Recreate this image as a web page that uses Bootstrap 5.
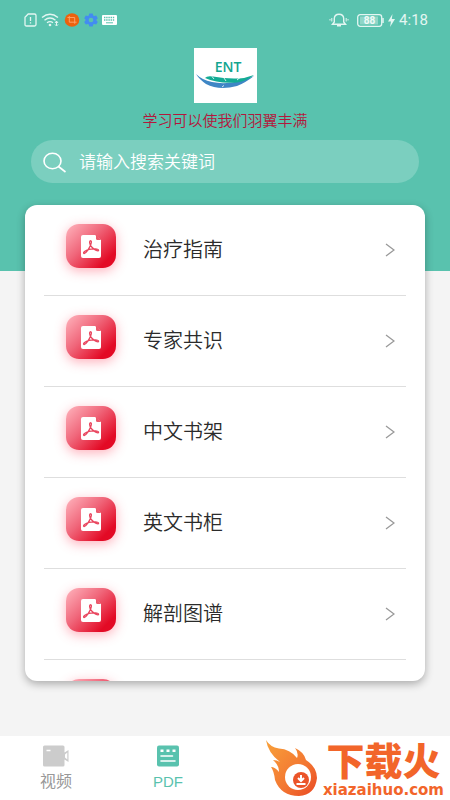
<!DOCTYPE html>
<html lang="zh-CN">
<head>
<meta charset="utf-8">
<meta name="viewport" content="width=device-width, initial-scale=1">
<title>PDF</title>
<link href="https://cdn.jsdelivr.net/npm/bootstrap@5.3.0/dist/css/bootstrap.min.css" rel="stylesheet">
<style>
:root { --teal: #59c2ae; }
body { background: #f4f4f4; color: #333; font-family: Roboto, "Noto Sans CJK SC", sans-serif; }
svg { display: block; flex: none; }
.top-area { background: var(--teal); padding-bottom: 88px; }
.status { height: 40px; padding: 0 22px 0 24px; color: #e3f6f2; font-size: 15px; }
.status-left { gap: 4px; }
.brand { margin-top: 8px; }
.slogan { color: #b3173c; font-size: 15px; font-weight: 350; line-height: 20px; margin: 8px 0 9px; }
.search { height: 43px; margin: 0 31px; padding: 2px 12px 0; gap: 12px; background: #7bcfbf; }
.search input { font-size: 17px; font-weight: 350; color: #fff; outline: 0; }
.search input::placeholder { color: #fff; opacity: 1; }
.panel { margin: -66px 25px 55px; border-radius: 12px; box-shadow: 0 3px 9px rgba(0,0,0,.3); flex: 1 1 0; min-height: 0; }
.entry { height: 91px; margin: 0 19px; padding: 0 11px 0 22px; border-bottom: 1px solid #dedede; color: #2b2b2b; font-size: 20px; font-weight: 350; }
.entry-icon { width: 50px; height: 44px; margin: -8px 27px 0 0; border-radius: 13px; background: linear-gradient(135deg, #ffb5be 0%, #f0667a 42%, #e30a25 82%); box-shadow: 0 3px 12px rgba(255,70,95,.42); }
.tabs { height: 64px; background: #fff; }
.tab { width: 112px; padding-top: 9px; font-size: 16px; line-height: 26px; color: #999; }
.tab svg { margin-bottom: 2px; }
.tab-on { color: var(--teal); font-family: "Liberation Sans", sans-serif; font-size: 15px; }
.site { color: #f2652a; padding-right: 6px; gap: 4px; }
.site-name { font: 900 38px/44px "Noto Sans CJK SC", sans-serif; }
.site-url { font: bold 15px/18px "DejaVu Sans", sans-serif; }
</style>
</head>
<body>
<div class="d-flex flex-column vh-100 overflow-hidden">
  <header class="top-area">
    <div class="status d-flex align-items-center justify-content-between">
      <div class="status-left d-flex align-items-center">
        <svg width="13" height="14" viewBox="0 0 13 14" fill="none" stroke="currentColor" stroke-width="1.3"><path d="M4.2 1H10.5Q12 1 12 2.500V11.500Q12 13 10.500 13H2.500Q1 13 1 11.500V4.200Z"/><path d="M6.500 4V8M6.500 9.200V10.500"/></svg>
        <svg width="19" height="14" viewBox="0 0 19 14" fill="none" stroke="currentColor" stroke-width="1.400"><path d="M1 4.500Q9 -2 17 4.500M3.500 7.200Q9 2.800 14.500 7.200M6 9.700Q9 7.500 12 9.700"/><circle cx="9" cy="12" r="1.300" fill="currentColor" stroke="none"/><path d="M15.500 8V12.500M14 10L15.500 8L17 10M14 11.500L15.500 13L17 11.500" stroke-width="1"/></svg>
        <svg width="16" height="14" viewBox="0 0 16 14"><ellipse cx="8" cy="7" rx="7.300" ry="6.700" fill="#ed620e"/><path d="M3.500 4.500H10.700V10.700M5.300 3V9.200H12.500" fill="none" stroke="#ffa066" stroke-width="1"/></svg>
        <svg width="14" height="14" viewBox="0 0 14 14"><path d="M5.300 .6H8.700L9.200 2.500L10.300 3.100L12.200 2.600L13.800 5.300L12.500 6.600V7.600L13.800 8.900L12.200 11.500L10.300 10.900L9.200 11.600L8.700 13.400H5.300L4.800 11.600L3.700 10.900L1.800 11.500L.2 8.900L1.500 7.600V6.600L.2 5.300L1.800 2.600L3.700 3.100L4.800 2.500Z" fill="#438cf1"/><circle cx="7" cy="7" r="2.300" fill="#59c2ae"/></svg>
        <svg width="15" height="10" viewBox="0 0 15 10"><rect width="15" height="10" rx="1" fill="#fff"/><path d="M2 2.500H13M2 5H13" stroke="#59c2ae" stroke-width="1.400" stroke-dasharray="1.400 .8"/><path d="M4 7.800H11" stroke="#59c2ae"/></svg>
      </div>
      <div class="d-flex align-items-center">
        <svg width="20" height="14" viewBox="0 0 20 14" fill="none" stroke="currentColor" stroke-width="1.400"><path d="M3.500 11.200H16.500L14.700 9V5.500Q14.500 1.200 10 1.200Q5.500 1.200 5.300 5.500V9ZM8 12.800H12"/><path d="M2.800 5V8.500M1 6V7.500M17.200 5V8.500M19 6V7.500" stroke-width="1"/></svg>
        <svg class="ms-2" width="27" height="13" viewBox="0 0 27 13"><rect x=".7" y=".7" width="24" height="11.600" rx="2.500" fill="none" stroke="currentColor" stroke-width="1.300"/><rect x="3" y="2.500" width="18" height="8" fill="#8fd6c8"/><path d="M26 4V9" stroke="currentColor" stroke-width="1.500"/><text x="12.500" y="10" text-anchor="middle" font-family="Roboto, sans-serif" font-size="10" font-weight="700" fill="#f0fbf8">88</text></svg>
        <svg class="mx-1" width="7" height="13" viewBox="0 0 7 13"><path d="M4.500 0L0 7.500H3L2 13L7 5H3.800Z" fill="currentColor"/></svg>
        <span>4:18</span>
      </div>
    </div>
    <svg class="brand mx-auto" width="63" height="55" viewBox="0 0 63 55"><rect width="63" height="55" fill="#fff"/><text x="34" y="24" text-anchor="middle" font-family="Open Sans, sans-serif" font-size="14" font-weight="600" fill="#13a58f">ENT</text><path d="M2 26Q8 32 18 34Q37 38 60 28Q51 35 43 38Q25 43 12 36Q5 31 2 26Z" fill="#3f86c5"/><path d="M11 30Q13 27.500 19 28.500Q35 31.500 50 30L60 27Q53 33 43 34.500Q24 36 11 30Z" fill="#13ab94"/><path d="M18 28.500L20 31M30 30L32 33M43 32L46 29.500M28 39L30 37.500" stroke="#fff" stroke-width=".8"/></svg>
    <p class="slogan text-center">学习可以使我们羽翼丰满</p>
    <form class="search d-flex align-items-center rounded-pill" role="search">
      <svg width="24" height="22" viewBox="0 0 24 22" fill="none" stroke="#fff" stroke-width="1.600"><ellipse cx="9.500" cy="9" rx="8.500" ry="7.800"/><path d="M15.500 14.500L22.500 20"/></svg>
      <input class="border-0 bg-transparent p-0 flex-grow-1" type="search" aria-label="搜索" placeholder="请输入搜索关键词">
    </form>
  </header>

  <main class="panel bg-white overflow-hidden">
    <a href="#" class="entry d-flex align-items-center text-decoration-none"><span class="entry-icon d-flex align-items-center justify-content-center"><svg width="20" height="23" viewBox="0 0 20 23"><use href="#pdf"/></svg></span><span class="flex-grow-1">治疗指南</span><svg width="10" height="14" viewBox="0 0 10 14"><use href="#next"/></svg></a>
    <a href="#" class="entry d-flex align-items-center text-decoration-none"><span class="entry-icon d-flex align-items-center justify-content-center"><svg width="20" height="23" viewBox="0 0 20 23"><use href="#pdf"/></svg></span><span class="flex-grow-1">专家共识</span><svg width="10" height="14" viewBox="0 0 10 14"><use href="#next"/></svg></a>
    <a href="#" class="entry d-flex align-items-center text-decoration-none"><span class="entry-icon d-flex align-items-center justify-content-center"><svg width="20" height="23" viewBox="0 0 20 23"><use href="#pdf"/></svg></span><span class="flex-grow-1">中文书架</span><svg width="10" height="14" viewBox="0 0 10 14"><use href="#next"/></svg></a>
    <a href="#" class="entry d-flex align-items-center text-decoration-none"><span class="entry-icon d-flex align-items-center justify-content-center"><svg width="20" height="23" viewBox="0 0 20 23"><use href="#pdf"/></svg></span><span class="flex-grow-1">英文书柜</span><svg width="10" height="14" viewBox="0 0 10 14"><use href="#next"/></svg></a>
    <a href="#" class="entry d-flex align-items-center text-decoration-none"><span class="entry-icon d-flex align-items-center justify-content-center"><svg width="20" height="23" viewBox="0 0 20 23"><use href="#pdf"/></svg></span><span class="flex-grow-1">解剖图谱</span><svg width="10" height="14" viewBox="0 0 10 14"><use href="#next"/></svg></a>
    <div class="entry d-flex align-items-center"><span class="entry-icon"></span></div>
  </main>

  <nav class="tabs d-flex justify-content-between">
    <div class="d-flex">
      <a href="#" class="tab d-flex flex-column align-items-center text-decoration-none"><svg width="26" height="22" viewBox="0 0 26 22"><path d="M1.500 .5H20Q21.500 .5 21.500 2V7.500L25.500 5V17L21.500 14.500V20Q21.500 21.500 20 21.500H1.500Q0 21.500 0 20V2Q0 .5 1.500 .5Z" fill="#ccc"/><path d="M3.500 5.500H7.500" stroke="#fff" stroke-width="1.500"/><path d="M24.300 7.500L22 9.500V12.500L24.300 14.500Z" fill="#fff"/></svg>视频</a>
      <a href="#" class="tab tab-on d-flex flex-column align-items-center text-decoration-none" aria-current="page"><svg width="22" height="22" viewBox="0 0 22 22"><rect y=".5" width="22" height="21" rx="2" fill="currentColor"/><path d="M3.500 5.700H6.500M9.500 5.700H12.500M15.500 5.700H18.500" stroke="#fff" stroke-width="2.500"/><path d="M4 11H15.500M4 16H18" stroke="#fff" stroke-width="1.600" stroke-linecap="round"/></svg>PDF</a>
    </div>
    <a href="#" class="site d-flex text-decoration-none align-items-center">
      <svg width="54" height="58" viewBox="0 0 54 58"><defs><linearGradient id="fire" x1="0" y1="0" x2="1" y2="1"><stop stop-color="#f8a13a"/><stop offset=".6" stop-color="#f37732"/><stop offset="1" stop-color="#e94823"/></linearGradient></defs><path d="M1 1Q5 8 14 9.500Q25 10 32 19Q34 14 30 9Q39 13 41 21Q52 28 52 39Q50 56 34 57Q16 57 10 41Q9 32 6 28Q10 28 14 33Q14 26 8 21Q12 21 15 23Q3 14 1 1Z" fill="url(#fire)"/><circle cx="33" cy="38" r="13" fill="#fff"/><circle cx="36" cy="41" r="8" fill="#eb5429"/><path d="M36 36V41M33 39L36 42L39 39M31.500 45H40.500" fill="none" stroke="#fff" stroke-width="2"/></svg>
      <span class="d-flex flex-column align-items-center"><span class="site-name">下载火</span><span class="site-url">xiazaihuo.com</span></span>
    </a>
  </nav>
</div>
<svg width="0" height="0" class="position-absolute" aria-hidden="true"><defs>
  <g id="pdf"><path d="M2 0H14L20 5V21Q20 23 18 23H2Q0 23 0 21V2Q0 0 2 0Z" fill="#fff"/><path d="M15 0L20 5H16.500Q15 5 15 3.500Z" fill="#ec596c"/><path d="M9 6C10.500 5 10.800 7 9.800 9.500C8.500 13 5 18.800 3 18.500C1.300 17.800 4.500 15.300 8 14.400C12 13.300 17.500 13.800 17.600 15.200C17.500 16.800 13.500 15 11.200 12.500C9.300 10.500 7.800 7.300 9 6Z" fill="none" stroke="#e9455e" stroke-width="1.300"/></g>
  <path id="next" d="M1 1L9 7L1 13" fill="none" stroke="#999" stroke-width="1.300"/>
</defs></svg>
<script src="https://cdn.jsdelivr.net/npm/bootstrap@5.3.0/dist/js/bootstrap.bundle.min.js"></script>
</body>
</html>
